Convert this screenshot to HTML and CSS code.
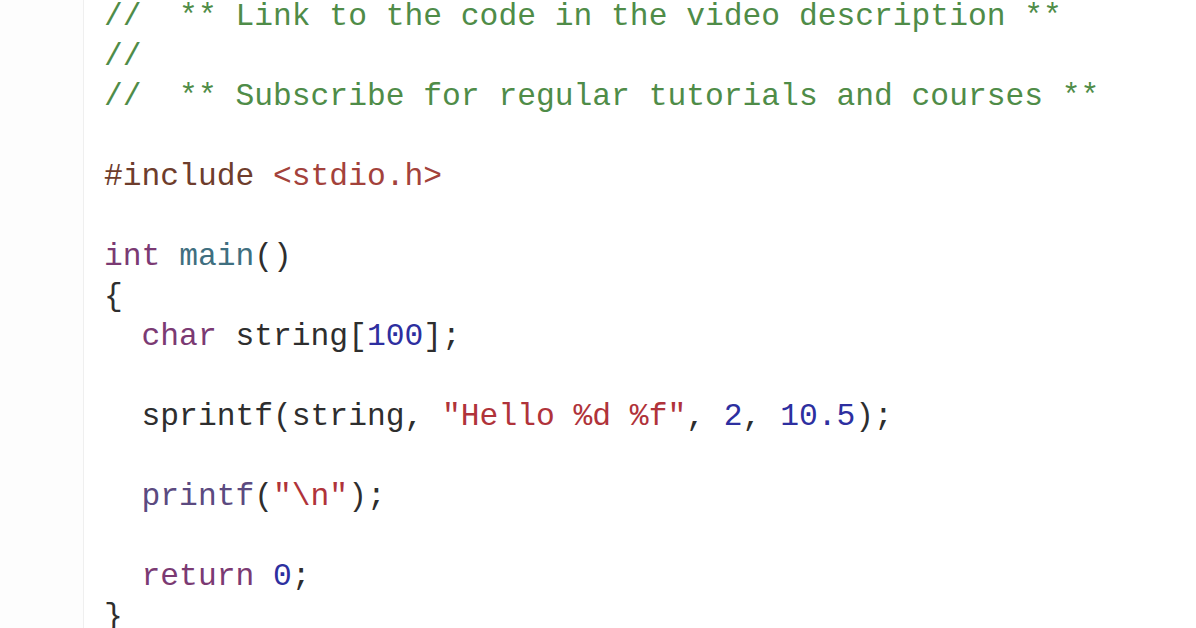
FILE: index.html
```html
<!DOCTYPE html>
<html>
<head>
<meta charset="utf-8">
<link rel="stylesheet" href="styles.css">
</head>
<body>
<div class="editor">
  <div class="gutter"></div>
  <div class="code">
    <div class="line"><span class="cm">//  ** Link to the code in the video description **</span></div>
    <div class="line"><span class="cm">//</span></div>
    <div class="line"><span class="cm">//  ** Subscribe for regular tutorials and courses **</span></div>
    <div class="line"></div>
    <div class="line"><span class="pp">#include</span> <span class="inc">&lt;stdio.h&gt;</span></div>
    <div class="line"></div>
    <div class="line"><span class="kw">int</span> <span class="fn">main</span>()</div>
    <div class="line">{</div>
    <div class="line">  <span class="kw">char</span> string[<span class="num">100</span>];</div>
    <div class="line"></div>
    <div class="line">  sprintf(string, <span class="str">"Hello %d %f"</span>, <span class="num">2</span>, <span class="num">10.5</span>);</div>
    <div class="line"></div>
    <div class="line">  <span class="lib">printf</span>(<span class="str">"\n"</span>);</div>
    <div class="line"></div>
    <div class="line">  <span class="kw">return</span> <span class="num">0</span>;</div>
    <div class="line">}</div>
  </div>
</div>
</body>
</html>
```
FILE: styles.css
```css
html, body {
  margin: 0;
  padding: 0;
  background: #ffffff;
  width: 1196px;
  height: 628px;
  overflow: hidden;
}
.editor {
  display: flex;
  height: 628px;
}
.gutter {
  width: 83px;
  flex: none;
  background: #fdfdfd;
  border-right: 1px solid #efefef;
}
.code {
  margin-top: -3px;
  padding-left: 20px;
  font-family: "Liberation Mono", monospace;
  font-size: 31.3px;
  line-height: 40px;
  color: #2e2e2e;
}
.line {
  height: 40px;
  white-space: pre;
}
.cm { color: #4f8c48; }
.pp { color: #6e3d2c; }
.inc { color: #a3423b; }
.kw { color: #7b3a73; }
.fn { color: #3f6f80; }
.lib { color: #5b4a80; }
.str { color: #b0333a; }
.num { color: #2d2fa0; }
```
